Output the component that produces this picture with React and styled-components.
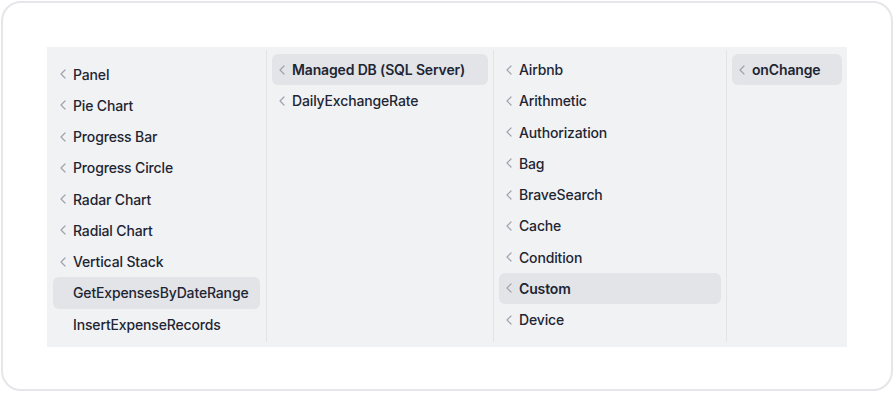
import React from "react";
import styled, { createGlobalStyle } from "styled-components";
import { ChevronLeft } from "lucide-react";

const GlobalStyle = createGlobalStyle`
  html, body {
    margin: 0;
    padding: 0;
    background: #ffffff;
    font-family: Inter, "Noto Sans", sans-serif;
  }
`;

// outer rounded frame
const Frame = styled.div`
  box-sizing: border-box;
  margin: 1px;
  width: 892px;
  height: 390px;
  border: 2px solid #e4e6e9;
  border-radius: 20px;
  padding: 44px;
`;

const Browser = styled.div`
  display: flex;
  width: 800px;
  height: 300px;
  background: #f1f2f4;
`;

const Column = styled.div`
  box-sizing: border-box;
  display: flex;
  flex-direction: column;
  width: ${(p) => p.$width}px;
  margin: 3px 0 5px;
  padding: ${(p) => p.$top}px ${(p) => p.$side}px 0;
  border-right: ${(p) => (p.$last ? "none" : "1px solid #e2e4e7")};
`;

const Item = styled.div`
  display: flex;
  align-items: center;
  height: 31.25px;
  padding-left: 2px;
  border-radius: 6px;
  background: ${(p) => (p.$active ? "#e2e4e8" : "transparent")};
  color: #1e2533;
  font-size: 14px;
  line-height: 1.375;
  letter-spacing: -0.15px;
  font-weight: ${(p) => (p.$bold ? 600 : 500)};
  white-space: nowrap;
`;

const IconSlot = styled.span`
  display: flex;
  width: 16px;
  height: 16px;
  margin-right: 2px;
  color: #9ca3af;
`;

const Entry = ({ label, active, bold, leaf }) => (
  <Item $active={active} $bold={bold}>
    <IconSlot>{!leaf && <ChevronLeft size={16} strokeWidth={1.8} />}</IconSlot>
    {label}
  </Item>
);

const columns = [
  {
    width: 220,
    top: 8.5,
    side: 6,
    items: [
      { label: "Panel" },
      { label: "Pie Chart" },
      { label: "Progress Bar" },
      { label: "Progress Circle" },
      { label: "Radar Chart" },
      { label: "Radial Chart" },
      { label: "Vertical Stack" },
      { label: "GetExpensesByDateRange", leaf: true, active: true },
      { label: "InsertExpenseRecords", leaf: true },
    ],
  },
  {
    width: 227,
    top: 4,
    side: 5,
    items: [
      { label: "Managed DB (SQL Server)", active: true, bold: true },
      { label: "DailyExchangeRate" },
    ],
  },
  {
    width: 233,
    top: 4,
    side: 5,
    items: [
      { label: "Airbnb" },
      { label: "Arithmetic" },
      { label: "Authorization" },
      { label: "Bag" },
      { label: "BraveSearch" },
      { label: "Cache" },
      { label: "Condition" },
      { label: "Custom", active: true, bold: true },
      { label: "Device" },
    ],
  },
  {
    width: 120,
    top: 4,
    side: 5,
    last: true,
    items: [{ label: "onChange", active: true, bold: true }],
  },
];

const App = () => {
  return (
    <>
      <GlobalStyle />
      <Frame>
        <Browser>
          {columns.map((col, i) => (
            <Column key={i} $width={col.width} $top={col.top} $side={col.side} $last={col.last}>
              {col.items.map((it) => (
                <Entry key={it.label} {...it} />
              ))}
            </Column>
          ))}
        </Browser>
      </Frame>
    </>
  );
};

export default App;
